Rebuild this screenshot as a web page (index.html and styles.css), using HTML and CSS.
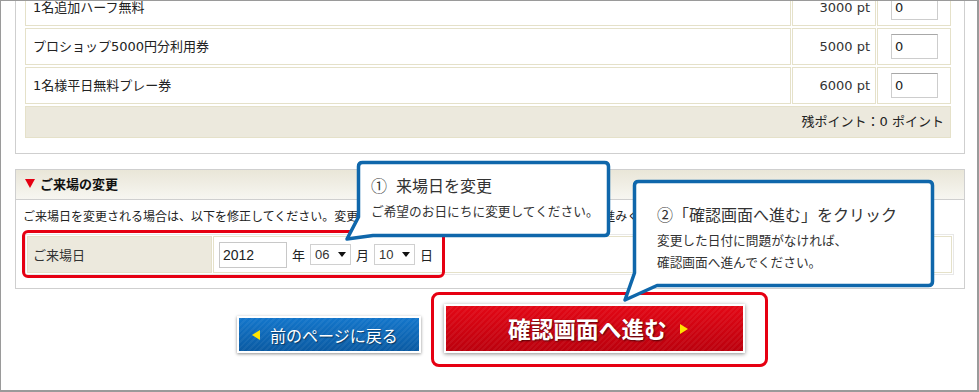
FILE: index.html
```html
<!DOCTYPE html>
<html lang="ja">
<head>
    <meta charset="UTF-8" />
    <title>ご来場の変更</title>
    <link rel="stylesheet" href="styles.css">
</head>
<body>

<div class="frame">
    <!-- Points exchange -->
    <div class="panel points-panel">
        <table class="points">
            <tr>
                <td class="name">1名追加ハーフ無料</td>
                <td class="pt">3000 pt</td>
                <td class="qty"><input type="text" value="0"></td>
            </tr>
            <tr>
                <td class="name">プロショップ5000円分利用券</td>
                <td class="pt">5000 pt</td>
                <td class="qty"><input type="text" value="0"></td>
            </tr>
            <tr>
                <td class="name">1名様平日無料プレー券</td>
                <td class="pt">6000 pt</td>
                <td class="qty"><input type="text" value="0"></td>
            </tr>
            <tr>
                <td class="remain" colspan="3">残ポイント：0 ポイント</td>
            </tr>
        </table>
    </div>

    <!-- Visit date change -->
    <div class="panel change-panel">
        <h2 class="panel-head"><span class="mark"></span>ご来場の変更</h2>
        <div class="change-body">
            <p class="note">ご来場日を変更される場合は、以下を修正してください。変更後は、「確認画面へ進む」ボタンを押して、お進みください。</p>
            <table class="date-form">
                <tr>
                    <th>ご来場日</th>
                    <td>
                        <div class="date-fields">
                            <input class="year" type="text" value="2012">
                            <span>年</span>
                            <span class="select">06</span>
                            <span>月</span>
                            <span class="select">10</span>
                            <span>日</span>
                        </div>
                    </td>
                </tr>
            </table>
        </div>
        <div class="hint-frame"></div>
    </div>

    <div class="actions">
        <button class="btn-back"><span class="tri-left"></span>前のページに戻る</button>
        <div class="action-frame">
            <button class="btn-next">確認画面へ進む<span class="tri-right"></span></button>
        </div>
    </div>

    <!-- Guide balloons -->
    <div class="callout callout-1">
        <svg class="bubble" width="268" height="82" viewBox="0 0 268 82">
            <path d="M17.5,2.5 H259.5 Q263.5,2.5 263.5,6.5 V71.5 Q263.5,75.5 259.5,75.5 H28 L2,79 L13.5,57 V6.5 Q13.5,2.5 17.5,2.5 Z" />
        </svg>
        <div class="callout-text">
            <div class="callout-title"><span class="num">①</span>来場日を変更</div>
            <p>ご希望のお日にちに変更してください。</p>
        </div>
    </div>

    <div class="callout callout-2">
        <svg class="bubble" width="318" height="126" viewBox="0 0 318 126">
            <path d="M18.5,3.5 H308.5 Q312.5,3.5 312.5,7.5 V103.5 Q312.5,107.5 308.5,107.5 H37 L5,122 L14.5,95 V7.5 Q14.5,3.5 18.5,3.5 Z" />
        </svg>
        <div class="callout-text">
            <div class="callout-title">②「確認画面へ進む」をクリック</div>
            <p>変更した日付に問題がなければ、<br>確認画面へ進んでください。</p>
        </div>
    </div>
</div>

</body>
</html>
```

FILE: styles.css
```css
/* General */
body {
    margin: 0;
    font-family: "DejaVu Sans", "Noto Sans CJK JP", sans-serif;
    font-size: 13px;
    color: #222;
    background: #fff;
}

.frame {
    position: relative;
    width: 979px;
    height: 392px;
    box-sizing: border-box;
    border-style: solid;
    border-color: #9a9a9a;
    border-width: 1px 2px 2px 1px;
    overflow: hidden;
}

.panel {
    width: 950px;
    box-sizing: border-box;
    margin-left: 14px;
    border: 1px solid #cfcfcf;
    background: #fff;
}

/* Points table */
.points-panel {
    margin-top: -14px;
    border-top: none;
    padding: 0 12px 13px 8px;
}

.points {
    width: 928px;
    border-collapse: separate;
    border-spacing: 1px 2px;
}

.points td {
    border: 1px solid #e5e1c9;
    padding: 0;
    height: 35px;
    line-height: 18px;
}

.points .name {
    padding-left: 7px;
}

.points .pt {
    width: 77px;
    padding-right: 5px;
    text-align: right;
    color: #333;
}

.points .qty {
    width: 59px;
    padding-left: 13px;
}

.points input {
    display: block;
    width: 47px;
    height: 25px;
    box-sizing: border-box;
    border: 1px solid #cdcdcd;
    border-top-color: #a8a8a8;
    padding: 0 3px;
    font: 13px "DejaVu Sans", sans-serif;
    color: #222;
}

.points .remain {
    height: 30px;
    background: #ece9dd;
    text-align: right;
    padding-right: 6px;
}

/* Visit date change */
.change-panel {
    position: relative;
    margin-top: 15px;
}

.panel-head {
    display: flex;
    align-items: center;
    height: 30px;
    box-sizing: border-box;
    margin: 0;
    padding: 0 0 3px 9px;
    font-family: "Noto Sans CJK JP", sans-serif;
    font-size: 13px;
    font-weight: bold;
    color: #111;
    background: linear-gradient(#e9e6d8, #f7f6f1);
    border-bottom: 1px solid #cfcfcf;
}

.panel-head .mark {
    width: 0;
    height: 0;
    border-left: 5px solid transparent;
    border-right: 5px solid transparent;
    border-top: 9px solid #e50012;
    margin-right: 5px;
}

.change-body {
    padding: 0 10px 13px 9px;
}

.note {
    margin: 0;
    padding: 7px 0 0 0;
    margin-left: -2px;
    font-family: "Noto Sans CJK JP", sans-serif;
    font-size: 12px;
    line-height: 18px;
    white-space: nowrap;
}

.date-form {
    width: 929px;
    margin-top: 9px;
    border: 1px solid #e8e8e8;
    border-collapse: separate;
    border-spacing: 1px;
}

.date-form th,
.date-form td {
    height: 35px;
    padding: 0 0 0 5px;
    border: 1px solid #e5e1c9;
    font-family: "Noto Sans CJK JP", sans-serif;
    font-size: 13px;
    font-weight: normal;
    text-align: left;
}

.date-form th {
    width: 178px;
    background: #ece9dd;
    color: #333;
}

.date-fields {
    display: flex;
    align-items: center;
    gap: 5px;
}

.date-fields .year {
    width: 68px;
    height: 26px;
    box-sizing: border-box;
    border: 1px solid #c8c8c8;
    padding: 0 3px;
    font: 14px "Liberation Sans", sans-serif;
    color: #222;
}

.select {
    display: flex;
    align-items: center;
    justify-content: space-between;
    width: 41px;
    height: 21px;
    box-sizing: border-box;
    border: 1px solid #d0d0d0;
    padding: 0 4px 0 4px;
    font: 13px "Liberation Sans", sans-serif;
    color: #333;
}

.select::after {
    content: "";
    border-left: 4px solid transparent;
    border-right: 4px solid transparent;
    border-top: 5px solid #111;
}

.hint-frame {
    position: absolute;
    left: 6px;
    top: 60px;
    width: 423px;
    height: 48px;
    box-sizing: border-box;
    border: 3px solid #e60012;
    border-radius: 6px;
}

/* Buttons */
.actions {
    display: flex;
    align-items: flex-start;
    padding-left: 236px;
}

.btn-back,
.btn-next {
    display: flex;
    align-items: center;
    box-sizing: border-box;
    border: 2px solid #fff;
    color: #fff;
    font-family: "Noto Sans CJK JP", sans-serif;
    cursor: pointer;
}

.btn-back {
    width: 184px;
    height: 37px;
    margin-top: 27px;
    padding: 0 0 0 13px;
    font-size: 16px;
    background:
        repeating-linear-gradient(-45deg, rgba(255, 255, 255, 0.05) 0 2px, transparent 2px 4px),
        linear-gradient(#1376cb, #0a5aa2);
    box-shadow: 0 1px 3px rgba(0, 0, 0, 0.45);
    text-shadow: 1px 1px 1px rgba(0, 0, 0, 0.45);
}

.tri-left {
    border-top: 5px solid transparent;
    border-bottom: 5px solid transparent;
    border-right: 8px solid #ffe400;
    margin-right: 10px;
}

.action-frame {
    width: 337px;
    height: 75px;
    box-sizing: border-box;
    margin: 3px 0 0 10px;
    padding: 9px 0 0 10px;
    border: 3px solid #e60012;
    border-radius: 8px;
}

.btn-next {
    width: 301px;
    height: 49px;
    padding: 0 0 0 62px;
    font-size: 22.7px;
    font-weight: bold;
    background:
        repeating-linear-gradient(-45deg, rgba(255, 255, 255, 0.05) 0 2px, transparent 2px 4px),
        linear-gradient(#e30715, #bb000d);
    box-shadow: 0 1px 4px rgba(0, 0, 0, 0.45);
    text-shadow: 1px 1px 2px rgba(0, 0, 0, 0.6);
}

.tri-right {
    border-top: 5px solid transparent;
    border-bottom: 5px solid transparent;
    border-left: 8px solid #ffe400;
    margin-left: 13px;
}

/* Guide balloons */
.callout {
    position: absolute;
    font-family: "Noto Sans CJK JP", sans-serif;
    color: #333;
}

.callout .bubble {
    position: absolute;
    left: 0;
    top: 0;
}

.callout .bubble path {
    fill: #fff;
    stroke: #0f67ab;
    stroke-width: 3.5;
    stroke-linejoin: round;
}

.callout-text {
    position: relative;
}

.callout-title {
    font-size: 16px;
    line-height: 22px;
    margin-bottom: 4px;
    white-space: nowrap;
}

.callout-title .num {
    margin-right: 9px;
}

.callout p {
    margin: 0;
    font-size: 12.7px;
    line-height: 22px;
    white-space: nowrap;
}

.callout-1 {
    left: 344px;
    top: 159px;
    width: 268px;
    height: 82px;
}

.callout-1 .callout-text {
    padding: 14px 0 0 26px;
}

.callout-2 {
    left: 619px;
    top: 177px;
    width: 318px;
    height: 126px;
}

.callout-2 .callout-text {
    padding: 25px 0 0 37px;
}
```
